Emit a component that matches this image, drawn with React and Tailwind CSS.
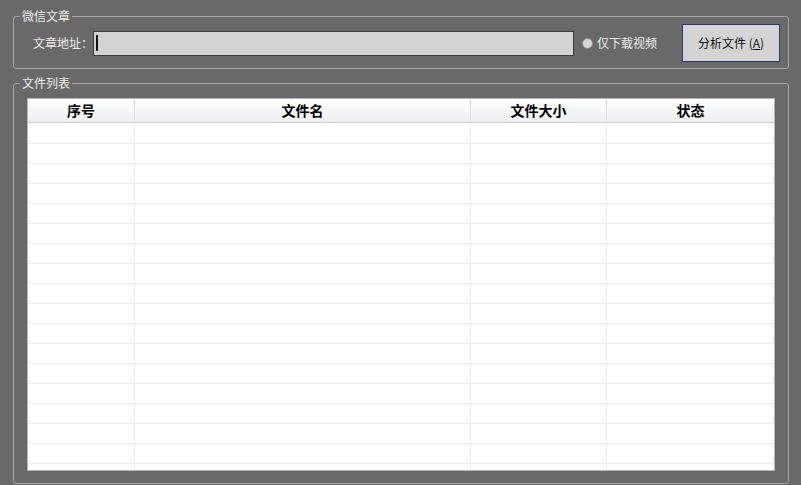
import React from 'react';

const COLS = [
  { key: 'no', label: '序号' },
  { key: 'name', label: '文件名' },
  { key: 'size', label: '文件大小' },
  { key: 'status', label: '状态' },
];

const font = { fontFamily: '"Noto Sans CJK SC", "DejaVu Sans", sans-serif' };

export default function App() {
  const rows = Array.from({ length: 18 });

  return (
    <div className="w-[801px] h-[485px] bg-[#696969] pt-[8px] pl-[13px] overflow-hidden text-[12px]" style={font}>
      {/* 微信文章 */}
      <fieldset className="w-[776px] border border-[#a3a3a3] rounded-[3px]">
        <legend className="ml-[6px] px-[2px] h-[16px] leading-[16px] text-[#ececec]">微信文章</legend>
        <div className="flex items-center h-[38px] pl-[19px] pr-[8px] mb-[6px]">
          <span className="w-[60px] text-[#ececec] leading-[16px]">文章地址：</span>
          <div className="w-[481px] h-[25px] bg-[#d3d3d3] border border-[#3b3b3b] flex items-center pl-[2px]">
            <div className="w-[2px] h-[16px] bg-[#111]" />
          </div>
          <div className="ml-[8px] w-[11px] h-[11px] rounded-full bg-[#d6d6d6] border border-[#8a8a8a]" />
          <span className="ml-[4px] text-[#ececec]">仅下载视频</span>
          <button className="ml-auto w-[98px] h-[38px] bg-[#d4d4d4] border border-[#1f3d74] text-[#111] text-[12px]">
            分析文件 (<span className="underline">A</span>)
          </button>
        </div>
      </fieldset>

      {/* 文件列表 */}
      <fieldset className="mt-[6px] w-[776px] border border-[#a3a3a3] rounded-[3px]">
        <legend className="ml-[6px] px-[2px] h-[16px] leading-[16px] text-[#ececec]">文件列表</legend>
        <div className="px-[13px] pt-[7px] pb-[12px]">
          <div className="h-[373px] bg-white border border-[#b4b4b4] flex flex-col overflow-hidden">
            <div className="grid grid-cols-[107px_336px_136px_1fr] h-[24px] bg-gradient-to-b from-white to-[#eceef1] border-b border-[#cfcfcf] shrink-0">
              {COLS.map((c, i) => (
                <div
                  key={c.key}
                  className={`flex items-center justify-center font-bold text-[14px] text-black ${i < 3 ? 'border-r border-[#dedede]' : ''}`}
                >
                  {c.label}
                </div>
              ))}
            </div>
            <div className="flex-1 overflow-hidden pt-[1px]">
              {rows.map((_, r) => (
                <div key={r} className="grid grid-cols-[107px_336px_136px_1fr] h-[20px] border-b border-[#ececec]">
                  <div className="border-r border-[#ececec]" />
                  <div className="border-r border-[#ececec]" />
                  <div className="border-r border-[#ececec]" />
                  <div />
                </div>
              ))}
            </div>
          </div>
        </div>
      </fieldset>
    </div>
  );
}
